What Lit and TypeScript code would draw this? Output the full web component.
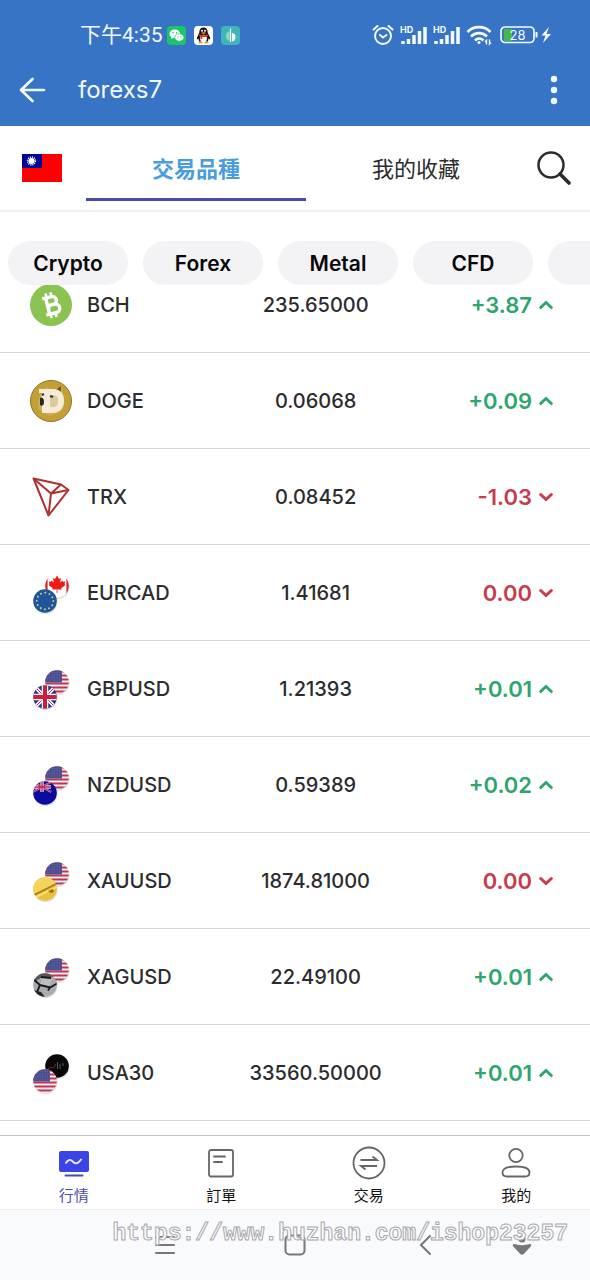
import { LitElement, html, svg, css } from "lit";
import { customElement, state } from "lit/decorators.js";
import { classMap } from "lit/directives/class-map.js";

type Row = { symbol: string; price: string; change: string; up: boolean };

const rows: Row[] = [
  { symbol: "BCH", price: "235.65000", change: "+3.87", up: true },
  { symbol: "DOGE", price: "0.06068", change: "+0.09", up: true },
  { symbol: "TRX", price: "0.08452", change: "-1.03", up: false },
  { symbol: "EURCAD", price: "1.41681", change: "0.00", up: false },
  { symbol: "GBPUSD", price: "1.21393", change: "+0.01", up: true },
  { symbol: "NZDUSD", price: "0.59389", change: "+0.02", up: true },
  { symbol: "XAUUSD", price: "1874.81000", change: "0.00", up: false },
  { symbol: "XAGUSD", price: "22.49100", change: "+0.01", up: true },
  { symbol: "USA30", price: "33560.50000", change: "+0.01", up: true },
];

// Disc artwork, each drawn in a 24x24 box and clipped to a circle.
const usa = svg`
  <rect width="24" height="24" fill="#f6eef2"/>
  <path d="M0 1.5H24M0 5.5H24M0 9.5H24M0 13.5H24M0 17.5H24M0 21.5H24" stroke="#bf3550" stroke-width="1.9"/>
  <rect width="17" height="12.5" fill="#4d5090"/>
  <path d="M2 2.5H17M2 5H17M2 7.500H17M2 10H17" stroke="#7375aa" stroke-width="0.8" stroke-dasharray="0.8 1.6"/>`;
const canada = svg`
  <rect width="24" height="24" fill="#fff"/>
  <rect width="2.600" height="17" y="3.500" fill="#d8232a"/><rect x="21.400" width="2.600" height="17" y="3.500" fill="#d8232a"/>
  <path d="M12 1.500l2 3.400 2-.9-.8 4.400 2.300-2 .5 1.400 2.300-.3-.8 2.700 1 .7-4.300 3.300.4 1.500-4.200-.5v3.800h-.8v-3.800l-4.200.5.4-1.500-4.300-3.300 1-.7-.8-2.700 2.300.3.500-1.400 2.300 2-.8-4.400 2 .9z" fill="#ee1c16"/>`;
const europe = svg`
  <rect width="24" height="24" fill="#1e559b"/>
  <circle cx="12" cy="12" r="8.300" fill="none" stroke="#c9cf7a" stroke-width="1.900" stroke-linecap="round" stroke-dasharray="0.100 4.245"/>`;
const britain = svg`
  <rect width="24" height="24" fill="#20398f"/>
  <path d="M0 0L24 24M24 0L0 24" stroke="#fff" stroke-width="3.500"/>
  <path d="M0 0L24 24M24 0L0 24" stroke="#cf1d40" stroke-width="1"/>
  <path d="M12 0V24M0 12H24" stroke="#fff" stroke-width="6.500"/>
  <path d="M12 0V24M0 12H24" stroke="#d01c3f" stroke-width="4"/>`;
const newZealand = svg`
  <rect width="24" height="24" fill="#0b0ba0"/>
  <path d="M0 1L18 11M18 1L0 11" stroke="#d9c5dd" stroke-width="2"/>
  <path d="M9 0V11M0 6H18" stroke="#e9d5e2" stroke-width="3.400"/>
  <path d="M9 0V11M0 6H18M0 1L18 11M18 1L0 11" stroke="#c02f5d" stroke-width="1.300"/>`;
const gold = svg`
  <rect width="24" height="24" fill="#ecc23d"/>
  <path d="M0 3L24-2V8L0 17z" fill="#f4d55c"/>
  <path d="M1 18L23 7" stroke="#a87a16" stroke-width="1.800"/>
  <path d="M2 20.500L24 10" stroke="#fae48a" stroke-width="1.500"/>
  <path d="M15 14l5-2 1 3-3 1z" fill="#98711f"/>`;
const silver = svg`
  <rect width="24" height="24" fill="#a9abad"/>
  <path d="M0 0H24V4L9 4 3 8 0 8z" fill="#55585b"/>
  <path d="M9 4l10 2-3 7H7z" fill="#bcbec0"/>
  <path d="M0 6l7 6-3 7M7 12l10 2.500 7-4M17 14.500l-2 3M8 4l10 1" stroke="#18191a" stroke-width="1.900" fill="none"/>
  <path d="M0 17l8 2 4 5H0z" fill="#222"/>`;
const chart = svg`
  <rect width="24" height="24" fill="#080809"/>
  <path d="M3 15l3-2 2 1 3-4" stroke="#7c2630" stroke-width="1" fill="none"/>
  <path d="M12.500 8v7M15 10v5M18 9v3" stroke="#47626a" stroke-width="1"/>`;

const pair = (id: string, back: unknown, front: unknown) => svg`
  <defs><clipPath id=${id}><circle cx="12" cy="12" r="11.800"/></clipPath></defs>
  <circle cx="27.500" cy="15" r="12" fill="#0002"/>
  <g transform="translate(15 2)"><g clip-path="url(#${id})">${back}</g></g>
  <circle cx="15.500" cy="30" r="12" fill="#0002"/>
  <g transform="translate(3 17)"><g clip-path="url(#${id})">${front}</g></g>`;

const coins: Record<string, unknown> = {
  BCH: svg`<circle cx="21" cy="21" r="21" fill="#8bc353"/>
    <g transform="rotate(-14 21 21)">
      <path d="M18.500 8.500V34M23.500 8.500V34" stroke="#fff" stroke-width="2.600"/>
      <path d="M14 13H23.500a4 4 0 0 1 0 8H17.500M23.500 21H24.500a4.200 4.200 0 0 1 0 8.600H14M17.500 13V29" stroke="#fff" stroke-width="3.400" fill="#8bc353"/>
      <path d="M17.500 21H24" stroke="#fff" stroke-width="3"/>
    </g>`,
  DOGE: svg`<circle cx="21" cy="21" r="20.500" fill="#c39f36" stroke="#8f7629"/>
    <path d="M9 30c-2-9 0-16 5-20l3-3 3 3h8l4-4 1 9c3 7 1 15-5 18l-8 3z" fill="#d2ad56"/>
    <path d="M26 10l5-4v6z" fill="#6b5626"/>
    <path d="M9 9h14c8 0 11 5 11 12s-4 12-12 12H12v-7l-2-5 2-5v-3H9z" fill="#f4ecd8"/>
    <path d="M20 15h3c4 0 5 2 5 6s-1 6-5 6h-3z" fill="#dccb9f"/>
    <path d="M10 18c3-1 4 1 4 4s-2 5-4 3z" fill="#222832"/>
    <path d="M12 15l2-1M20 16l3 1" stroke="#39352c" stroke-width="2"/>`,
  TRX: svg`<g fill="none" stroke="#b0302d" stroke-width="2" stroke-linejoin="round">
    <path d="M3.500 2.500L31 8.500 38.500 14 18.500 39.500z"/><path d="M3.500 2.500L21 17.500 18.500 39.500M21 17.500L31 8.500M21 17.500L38.500 14"/></g>`,
  EURCAD: pair("eurcad", canada, europe),
  GBPUSD: pair("gbpusd", usa, britain),
  NZDUSD: pair("nzdusd", usa, newZealand),
  XAUUSD: pair("xauusd", usa, gold),
  XAGUSD: pair("xagusd", usa, silver),
  USA30: pair("usa30", chart, usa),
};

const navItems = [
  { label: "行情", icon: svg`<rect x="2" y="5" width="30" height="21" rx="2" fill="#3b44e4"/>
      <path d="M8.500 17.500c2.500-4 5-4.500 7.500-1.800s5 2.200 8.500-2.700" fill="none" stroke="#e4e6ff" stroke-width="2"/>
      <path d="M8.500 29.500H25.500" stroke="#474ab4" stroke-width="2" stroke-linecap="round"/>` },
  { label: "訂單", icon: svg`<g fill="none" stroke="#666" stroke-width="1.800" stroke-linecap="round"><rect x="5" y="4" width="24" height="26.500" rx="2"/><path d="M10 10.500H21M10 16H18"/></g>` },
  { label: "交易", icon: svg`<g fill="none" stroke="#666" stroke-width="1.800"><circle cx="17" cy="17" r="15.500"/><path d="M8.500 14H25L20.500 10.500M25 20H9L13.500 23.500"/></g>` },
  { label: "我的", icon: svg`<g fill="none" stroke="#666" stroke-width="1.800"><circle cx="17" cy="9.500" r="6.700"/><path d="M3.500 26.500c0-4 5-6 13.500-6s13.500 2 13.500 6c0 2.700-1.500 4-4.500 4H8c-3 0-4.500-1.300-4.500-4z"/></g>` },
];

const signal = svg`
  <text x="0" y="8" font-size="9" font-weight="700">HD</text>
  <path d="M3 19v-3M8.500 19v-5M14 19V10M19.500 19V6M25 19V2" stroke="currentColor" stroke-width="3.500"/>`;

@customElement("app-root")
export class AppRoot extends LitElement {
  @state() private tab = 0;
  @state() private section = 0;

  static styles = css`
    :host {
      display: flex;
      flex-direction: column;
      min-height: 100vh;
      position: relative;
      overflow-x: hidden;
      background: #fff;
      color: #2c2c2e;
      font-family: Inter, "Noto Sans CJK TC", sans-serif;
    }
    * { box-sizing: border-box; }
    svg { display: block; flex: none; }
    svg text { fill: currentColor; font-family: Inter, sans-serif; }
    button {
      border: 0;
      padding: 0;
      background: none;
      color: inherit;
      font: inherit;
      cursor: pointer;
    }
    header { background: #3874c6; color: #f2f9ff; height: 126px; padding-top: 16px; }
    .status { display: flex; align-items: center; height: 38px; padding: 0 37px 0 80px; }
    .clock { font: 21px/38px Roboto, "Noto Sans CJK TC", sans-serif; margin-right: 4px; }
    .apps, .signals { display: flex; align-items: center; gap: 8px; }
    .signals { margin-left: auto; gap: 6px; }
    .bar { display: flex; align-items: center; height: 72px; padding: 0 24px 0 18px; }
    .bar h1 { flex: 1; margin: 0; padding-left: 30px; font-size: 24px; font-weight: 400; line-height: 32px; }
    .top {
      display: flex;
      align-items: center;
      height: 86px;
      padding: 0 18px 0 22px;
      border-bottom: 2px solid #f0f0f2;
    }
    .tabs { flex: 1; display: flex; margin: 0 10px 0 24px; }
    .tab {
      flex: 1;
      height: 66px;
      padding-bottom: 3px;
      border-top: 3px solid transparent;
      border-bottom: 3px solid transparent;
      font-size: 22px;
    }
    .tab.on { color: #4a9ddd; font-weight: 700; border-bottom-color: #4a49ae; }
    .chips { display: flex; gap: 15px; padding: 29px 8px 0; overflow: hidden; }
    .chip {
      flex: none;
      width: 120px;
      height: 44px;
      border-radius: 22px;
      background: #f3f3f5;
      color: #08080a;
      font-size: 21px;
      font-weight: 600;
    }
    .list { flex: 1; overflow: hidden; }
    table { width: 100%; margin-top: -28px; table-layout: fixed; border-collapse: separate; border-spacing: 0; }
    .c-name { width: 36%; }
    .c-price { width: 35%; }
    th, td { height: 96px; padding: 0; border-bottom: 1px solid #d6d6d8; font-weight: 500; font-size: 20px; }
    .name { display: flex; align-items: center; gap: 15px; padding-left: 30px; }
    .price { text-align: center; }
    .change { display: flex; align-items: center; justify-content: flex-end; gap: 7px; padding-right: 37px; font-size: 22px; font-weight: 600; color: #c93a4b; }
    .change.up { color: #2da56c; }
    .nav { display: flex; height: 74px; border-top: 1px solid #c4c4c6; }
    .item { flex: 1; display: flex; flex-direction: column; align-items: center; padding-top: 10px; gap: 6px; font-size: 15px; line-height: 20px; color: #111; }
    .item.on { color: #4a4da8; }
    .system {
      display: grid;
      grid-template-columns: 22fr 22fr 22fr 11fr;
      height: 71px;
      padding: 0 6% 0 17%;
      background: #f9fafc;
      border-top: 1px solid #ededf0;
      color: #77777a;
    }
    .system button { display: grid; place-items: center; }
    .mark {
      position: absolute;
      right: 22px;
      bottom: 32px;
      font: bold 23px/28px "Liberation Mono", monospace;
      color: #f9fafc;
      -webkit-text-stroke: 1px #a9a9ad;
      pointer-events: none;
    }
  `;

  render() {
    return html`
      <header>
        <div class="status">
          <span class="clock">下午4:35</span>
          <div class="apps">
            <svg width="19" height="19" viewBox="0 0 19 19"><rect width="19" height="19" rx="4" fill="#1dc469"/><ellipse cx="7.800" cy="7.800" rx="5.300" ry="4.300" fill="#fff"/><path d="M4.500 10l-.5 3 3-1.500z" fill="#fff"/><ellipse cx="12.300" cy="11.500" rx="4.600" ry="3.700" fill="#fff" stroke="#1dc469" stroke-width=".7"/><g fill="#1dc469"><circle cx="6" cy="6.700" r=".8"/><circle cx="9.600" cy="6.700" r=".8"/><circle cx="11" cy="10.800" r=".6"/><circle cx="13.800" cy="10.800" r=".6"/></g></svg>
            <svg width="19" height="19" viewBox="0 0 19 19"><rect width="19" height="19" rx="4" fill="#fff"/><path d="M9.500 1.500c-3 0-4.300 2-4.200 5L3 11.500c-.5 2 .3 2.500 1.500 1l.5 3h9l.5-3c1.200 1.500 2 1 1.500-1l-2.300-5c.1-3-1.200-5-4.200-5z" fill="#15151a"/><ellipse cx="9.500" cy="12.500" rx="3.400" ry="3.700" fill="#fff"/><path d="M5.200 8.300c3 1.200 5.600 1.200 8.600 0v1.900c-2 .9-4 1.100-5.500.9V13H6.500v-2.500l-1.300-.5z" fill="#e4342f"/><circle cx="8" cy="4.700" r="1" fill="#fff"/><circle cx="11" cy="4.700" r="1" fill="#fff"/><ellipse cx="9.500" cy="7" rx="2.300" ry=".8" fill="#f0a020"/><path d="M4.500 16.700h4M10.500 16.700h4" stroke="#f0a020" stroke-width="1.600"/></svg>
            <svg width="19" height="19" viewBox="0 0 19 19"><rect width="19" height="19" rx="4" fill="#3fb5b8"/><path d="M8.500 5v9.500C6 14 5 12.500 5 10s1.500-4.500 3.500-5z" fill="#8fdcb0"/><path d="M9.500 2.500V16" stroke="#fff" stroke-width="1.200"/><path d="M11 7c2.500.3 3.500 1.500 3.500 4S13.500 15 11 15.500z" fill="#fff"/></svg>
          </div>
          <div class="signals">
            <svg width="22" height="22" viewBox="0 0 22 22" fill="none" stroke="currentColor" stroke-width="2" stroke-linecap="round"><circle cx="11" cy="12" r="8"/><path d="M1.500 5.500L5.500 2M20.500 5.500L16.500 2M8 11l3 2.500 3.500-2.500"/></svg>
            <svg width="27" height="20" viewBox="0 0 27 20">${signal}</svg>
            <svg width="27" height="20" viewBox="0 0 27 20">${signal}</svg>
            <svg width="27" height="21" viewBox="0 0 27 21" fill="none" stroke="currentColor" stroke-width="2.600"><path d="M1.500 7c6-6.500 17-6.500 23 0M5 11.500c4.500-4.500 11.500-4.500 16 0M9 15.500c2.500-2.500 6-2.500 8.500 0"/><circle cx="13" cy="17.500" r="1.500" fill="currentColor" stroke="none"/><path d="M20.500 19.500v-4l-1.500 1.500M23.500 14.500v4.500l1.500-1.500" stroke-width="1.400"/></svg>
            <svg width="54" height="20" viewBox="0 0 54 20"><rect x="5" y="4" width="8" height="12" fill="#49b649"/><rect x="2" y="2" width="33" height="15.500" rx="4" fill="none" stroke="currentColor" stroke-width="1.700"/><path d="M37.500 7v5.500" stroke="currentColor" stroke-width="2"/><text x="18.500" y="14.500" font-size="13" text-anchor="middle">28</text><path d="M50 2l-7.500 8.500h4L44 18l8-9h-4.500z" fill="currentColor"/></svg>
          </div>
        </div>
        <div class="bar">
          <button aria-label="Back"><svg width="30" height="28" viewBox="0 0 30 28" fill="none" stroke="currentColor" stroke-width="2.700" stroke-linecap="round" stroke-linejoin="round"><path d="M14.500 3L3 14l11.500 11M3 14H26"/></svg></button>
          <h1>forexs7</h1>
          <button aria-label="More"><svg width="24" height="30" viewBox="0 0 24 30" fill="currentColor"><circle cx="12" cy="4" r="3.200"/><circle cx="12" cy="15" r="3.200"/><circle cx="12" cy="26" r="3.200"/></svg></button>
        </div>
      </header>
      <div class="top">
        <button aria-label="Language"><svg width="40" height="28" viewBox="0 0 40 28"><rect width="40" height="28" fill="#fe0000"/><rect width="20" height="14" fill="#000095"/><circle cx="9.500" cy="7" r="3.900" fill="none" stroke="#fff" stroke-width="1.600" stroke-dasharray="1 1.042"/><circle cx="9.500" cy="7" r="3" fill="#fff"/></svg></button>
        <nav class="tabs">
          ${["交易品種", "我的收藏"].map((t, i) => html`<button class=${classMap({ tab: true, on: this.tab === i })} @click=${() => (this.tab = i)}>${t}</button>`)}
        </nav>
        <button aria-label="Search"><svg width="36" height="36" viewBox="0 0 36 36" fill="none" stroke="#2b2b2b"><circle cx="15" cy="15" r="12.500" stroke-width="2.500"/><path d="M24 24L33 33" stroke-width="3.600" stroke-linecap="round"/></svg></button>
      </div>
      <div class="chips">
        ${["Crypto", "Forex", "Metal", "CFD", ""].map((c) => html`<button class="chip" aria-label=${c || "More"}>${c}</button>`)}
      </div>
      <main class="list">
        <table>
          <colgroup><col class="c-name" /><col class="c-price" /><col /></colgroup>
          <tbody>
            ${rows.map((r) => html`<tr>
              <th scope="row"><div class="name"><svg width="42" height="42" viewBox="0 0 42 42">${coins[r.symbol]}</svg>${r.symbol}</div></th>
              <td class="price">${r.price}</td>
              <td><div class=${classMap({ change: true, up: r.up })}>${r.change}<svg width="14" height="10" viewBox="0 0 14 10" fill="none" stroke="currentColor" stroke-width="3" stroke-linecap="round"><path d=${r.up ? "M1.700 7.500L7 2.500l5.300 5" : "M1.700 2.500L7 7.500l5.300-5"}/></svg></div></td>
            </tr>`)}
          </tbody>
        </table>
      </main>
      <nav class="nav">
        ${navItems.map((n, i) => html`<button class=${classMap({ item: true, on: this.section === i })} @click=${() => (this.section = i)}><svg width="34" height="34" viewBox="0 0 34 34">${n.icon}</svg>${n.label}</button>`)}
      </nav>
      <div class="system">
        <button aria-label="Menu"><svg width="22" height="20" viewBox="0 0 22 20" stroke="currentColor" stroke-width="2" stroke-linecap="round"><path d="M2 2H20M2 10H20M2 18H20"/></svg></button>
        <button aria-label="Home"><svg width="22" height="22" viewBox="0 0 22 22" fill="none" stroke="currentColor" stroke-width="2"><rect x="1.500" y="1.500" width="19" height="19" rx="4"/></svg></button>
        <button aria-label="Previous"><svg width="14" height="22" viewBox="0 0 14 22" fill="none" stroke="currentColor" stroke-width="2" stroke-linecap="round"><path d="M12 2L3 11l9 9"/></svg></button>
        <button aria-label="Accessibility"><svg width="20" height="22" viewBox="0 0 20 22" fill="currentColor"><circle cx="10" cy="5" r="3.500"/><path d="M2 10c5 1.500 11 1.500 16 0 1.500 0 1.500 1.500.7 2.500L12 19.700c-1.300 1.300-2.700 1.300-4 0L1.300 12.500C.5 11.500.5 10 2 10z"/></svg></button>
      </div>
      <div class="mark">https://www.huzhan.com/ishop23257</div>
    `;
  }
}
